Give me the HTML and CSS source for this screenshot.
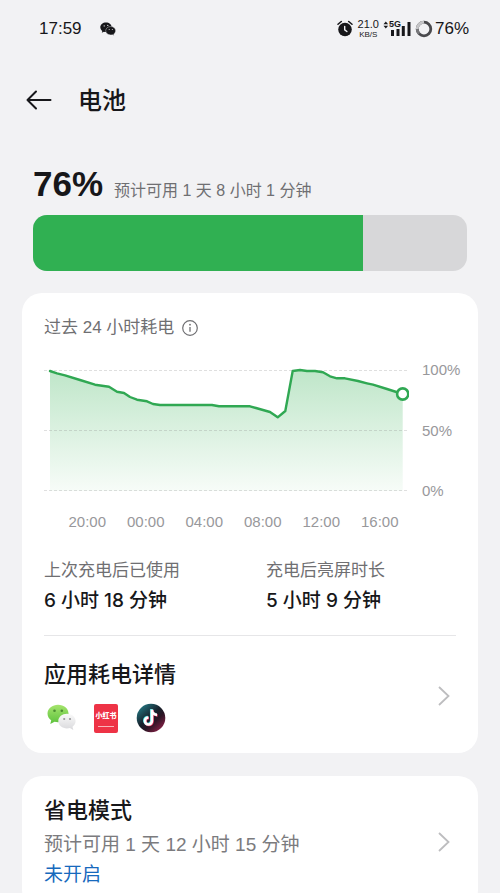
FILE: index.html
```html
<!DOCTYPE html>
<html lang="zh-CN">
<head>
<meta charset="utf-8">
<meta name="viewport" content="width=device-width, initial-scale=1">
<title>电池</title>
<link rel="stylesheet" href="styles.css">
</head>
<body>
<div class="status">
  <time>17:59</time>
  <svg class="status-chat" width="16" height="14" viewBox="0 0 16 14" aria-hidden="true">
    <path d="M6 .4C2.800.4.3 2.500.3 5.200c0 1.500.8 2.800 2 3.700l-.5 1.800 2.100-1c.6.2 1.300.3 2.100.3 3.200 0 5.700-2.100 5.700-4.800S9.200.4 6 .4z" fill="#17171a"/>
    <path d="M10.700 4.500c-2.800 0-5 1.900-5 4.200s2.200 4.200 5 4.200c.6 0 1.200-.1 1.700-.2l1.700.9-.4-1.600c1.200-.8 1.900-1.900 1.900-3.300 0-2.300-2.100-4.200-4.900-4.200z" fill="#17171a" stroke="#f2f2f4" stroke-width=".4"/>
    <circle cx="4.200" cy="3.900" r=".6" fill="#f2f2f4"/><circle cx="7.800" cy="3.400" r=".6" fill="#f2f2f4"/>
    <circle cx="9.200" cy="7.600" r=".5" fill="#f2f2f4"/><circle cx="12.300" cy="7.600" r=".5" fill="#f2f2f4"/>
  </svg>
  <div class="status-right">
    <svg width="16" height="17" viewBox="0 0 16 17" aria-hidden="true">
      <circle cx="8" cy="9.500" r="6.800" fill="#17171a"/>
      <path d="M1 4.300 4.300 1.500M15 4.300 11.700 1.500" stroke="#17171a" stroke-width="1.500" stroke-linecap="round"/>
      <path d="M7.700 6.500v3.300l2.200 1.700" fill="none" stroke="#f2f2f4" stroke-width="1.400" stroke-linecap="round"/>
    </svg>
    <div class="speed"><span>21.0</span><small>KB/S</small></div>
    <div class="signal">
      <svg width="28" height="17" viewBox="0 0 28 17" aria-hidden="true">
        <path d="M.5 4.300 2.800 1.500 5.100 4.300zM.5 5.700 2.800 8.500 5.100 5.700z" fill="#17171a"/>
        <path d="M8 10h3v6H8zM13.500 9h3v7h-3zM18.800 6h3v10h-3zM24.500 2h3v14h-3z" fill="#17171a"/>
      </svg>
      <span class="network">5G</span>
    </div>
    <svg width="18" height="18" viewBox="0 0 18 18" aria-hidden="true">
      <g fill="none" stroke-width="2.800">
        <circle cx="9" cy="9" r="6.800" stroke="#4a4a4d"/>
        <path d="M9 2.200A6.800 6.800 0 0 0 2.200 9" stroke="#c6c6c8"/>
        <path d="M2.200 9A6.800 6.800 0 0 0 4.200 13.800" stroke="#77777a"/>
      </g>
    </svg>
    <span class="level">76%</span>
  </div>
</div>

<header class="appbar">
  <button class="back" type="button" aria-label="返回">
    <svg width="26" height="20" viewBox="0 0 26 20" aria-hidden="true">
      <path d="M24.500 10H1.500M10 1.500 1.500 10 10 18.500" fill="none" stroke="#17171a" stroke-width="2" stroke-linecap="round" stroke-linejoin="round"/>
    </svg>
  </button>
  <h1>电池</h1>
</header>

<main>
  <section class="summary">
    <p class="headline"><strong>76%</strong><span>预计可用 1 天 8 小时 1 分钟</span></p>
    <div class="meter"><div class="meter-fill" style="width:76%"></div></div>
  </section>

  <section class="card">
    <h2 class="caption">过去 24 小时耗电
      <svg width="16" height="16" viewBox="0 0 16 16" aria-hidden="true">
        <circle cx="8" cy="8" r="7.300" fill="none" stroke="#6f6f72" stroke-width="1.200"/>
        <path d="M8 7v4.700" stroke="#6f6f72" stroke-width="1.300"/><circle cx="8" cy="4.700" r=".9" fill="#6f6f72"/>
      </svg>
    </h2>
    <div class="chart">
      <svg class="plot" viewBox="0 0 365 141" aria-hidden="true">
        <defs>
          <linearGradient id="area" x1="0" y1="10" x2="0" y2="131" gradientUnits="userSpaceOnUse">
            <stop offset="0" stop-color="#bfe6c9"/><stop offset="1" stop-color="#f7fcf8"/>
          </linearGradient>
        </defs>
        <path fill="url(#area)" d="M6 11 13 13.300 21 15.300 36 20 51 24.700 65 26.700 73 31.700 80 33 86 37 93 39.700 103 41.300 109 44 116 45H168L175 46.300H206L212 48 226 52 233.700 57.300 241.300 51 248.700 11 256 10 263 11H271L279 12.300 286 16.300 293 18.300H301L314 21 323 23.300 329 24.700 343 29 358.700 34V131H6z"/>
        <path d="M0 10.500H365M0 70.500H365M0 130.500H365" stroke="#808080" stroke-opacity=".25" stroke-width="1" stroke-dasharray="3 2"/>
        <path fill="none" stroke="#30a853" stroke-width="2.400" stroke-linejoin="round" stroke-linecap="round" d="M6 11 13 13.300 21 15.300 36 20 51 24.700 65 26.700 73 31.700 80 33 86 37 93 39.700 103 41.300 109 44 116 45H168L175 46.300H206L212 48 226 52 233.700 57.300 241.300 51 248.700 11 256 10 263 11H271L279 12.300 286 16.300 293 18.300H301L314 21 323 23.300 329 24.700 343 29 358.700 34"/>
        <circle cx="358.700" cy="34" r="5.600" fill="#fff" stroke="#30a853" stroke-width="2.600"/>
      </svg>
      <div class="y-axis"><span>100%</span><span>50%</span><span>0%</span></div>
      <div class="x-axis"><span>20:00</span><span>00:00</span><span>04:00</span><span>08:00</span><span>12:00</span><span>16:00</span></div>
    </div>
    <dl class="stats">
      <div><dt>上次充电后已使用</dt><dd>6 小时 18 分钟</dd></div>
      <div><dt>充电后亮屏时长</dt><dd>5 小时 9 分钟</dd></div>
    </dl>
    <a class="row" href="#apps">
      <div>
        <h3>应用耗电详情</h3>
        <div class="apps">
          <svg width="30" height="30" viewBox="0 0 30 30" aria-hidden="true">
            <defs>
              <linearGradient id="leaf" x1="0" y1="0" x2="0" y2="1"><stop offset="0" stop-color="#a5e46d"/><stop offset="1" stop-color="#5cc13c"/></linearGradient>
              <linearGradient id="pearl" x1="0" y1="0" x2="0" y2="1"><stop offset="0" stop-color="#fafafa"/><stop offset="1" stop-color="#d9d9dc"/></linearGradient>
            </defs>
            <path d="M12 1.800C6.500 1.800 1.500 5.600 1.500 10.500c0 2.900 1.500 5.200 3.700 6.800L4.300 21l4.200-2.200c1.100.3 2.300.4 3.500.4 6 0 10.500-3.900 10.500-8.700S18 1.800 12 1.800z" fill="url(#leaf)"/>
            <circle cx="8.500" cy="7.800" r="1.300" fill="#4b8d32"/><circle cx="15.800" cy="7.800" r="1.300" fill="#4b8d32"/>
            <path d="M21 10.800c-4.800 0-8.700 3.200-8.700 7.300s3.900 7.400 8.700 7.400c1 0 2-.1 2.900-.4l3.400 1.900-.8-3.200c1.900-1.400 3.100-3.400 3.100-5.700 0-4.100-3.800-7.300-8.600-7.300z" fill="url(#pearl)"/>
            <circle cx="18.200" cy="16" r="1.100" fill="#98989b"/><circle cx="24" cy="16" r="1.100" fill="#98989b"/>
          </svg>
          <span class="red-app"><b>小红书</b><i></i></span>
          <svg width="30" height="30" viewBox="0 0 30 30" aria-hidden="true">
            <defs>
              <linearGradient id="disc" x1=".1" y1=".1" x2=".85" y2=".95"><stop offset="0" stop-color="#237782"/><stop offset=".45" stop-color="#17202b"/><stop offset=".65" stop-color="#2b1524"/><stop offset="1" stop-color="#8c2148"/></linearGradient>
            </defs>
            <circle cx="15" cy="15" r="14.300" fill="url(#disc)"/>
            <g fill="none" stroke-width="2.700">
              <path d="M15.900 6.500V18a3.500 3.500 0 1 1-3.500-3.500M15.900 7c.2 2.800 2.300 4.700 5.100 4.800" stroke="#35d4d8" transform="translate(-.6 -.5)"/>
              <path d="M15.900 6.500V18a3.500 3.500 0 1 1-3.500-3.500M15.900 7c.2 2.800 2.300 4.700 5.100 4.800" stroke="#ee3b65" transform="translate(.6 .5)"/>
              <path d="M15.900 6.500V18a3.500 3.500 0 1 1-3.500-3.500M15.900 7c.2 2.800 2.300 4.700 5.100 4.800" stroke="#fff"/>
            </g>
          </svg>
        </div>
      </div>
      <svg class="chevron" width="12" height="20" viewBox="0 0 12 20" aria-hidden="true"><path d="M1 1 10.500 10 1 19" fill="none" stroke="#bdbdbf" stroke-width="1.800"/></svg>
    </a>
  </section>

  <section class="card">
    <a class="row saver" href="#saver">
      <div>
        <h3>省电模式</h3>
        <p>预计可用 1 天 12 小时 15 分钟</p>
        <p class="state">未开启</p>
      </div>
      <svg class="chevron" width="12" height="20" viewBox="0 0 12 20" aria-hidden="true"><path d="M1 1 10.500 10 1 19" fill="none" stroke="#bdbdbf" stroke-width="1.800"/></svg>
    </a>
  </section>
</main>
</body>
</html>
```

FILE: styles.css
```css
* { box-sizing: border-box; margin: 0; padding: 0; }

body {
  background: #f2f2f4;
  color: #17171a;
  font-family: "Liberation Sans", "Noto Sans CJK SC", sans-serif;
  font-size: 16px;
  line-height: 24px;
}

a { color: inherit; text-decoration: none; }
svg { display: block; flex: none; }

.status {
  display: flex;
  align-items: center;
  height: 57px;
  padding: 0 31px 0 39px;
}
.status time { font-size: 17px; }
.status-chat { margin-left: 18px; }
.status-right { display: flex; align-items: center; margin-left: auto; }
.speed {
  display: flex;
  flex-direction: column;
  align-items: center;
  margin: 0 4px 0 5px;
  font-size: 11px;
  line-height: 12px;
}
.speed small { font-size: 8px; line-height: 9px; }
.signal { position: relative; }
.network {
  position: absolute;
  top: 0;
  left: 6px;
  background: #f2f2f4;
  font-size: 9px;
  font-weight: 700;
  line-height: 9px;
}
.signal + svg { margin: 0 2px 0 4px; }
.level { font-size: 17px; }

.appbar {
  display: flex;
  align-items: center;
  gap: 26px;
  height: 86px;
  padding: 0 26px;
}
.back { border: 0; background: none; cursor: pointer; }
h1 { padding-top: 2px; font-size: 24px; font-weight: 500; line-height: 36px; }

main { padding: 0 22px; }

.summary { padding: 21px 11px 22px; }
.headline { display: flex; align-items: baseline; gap: 11px; }
.headline strong { font-size: 35px; font-weight: 700; line-height: 40px; }
.headline span { color: #6f6f72; }
.meter {
  height: 56px;
  margin-top: 11px;
  overflow: hidden;
  border-radius: 14px;
  background: #d7d7d9;
}
.meter-fill { height: 100%; background: #30b052; }

.card {
  margin-bottom: 23px;
  padding: 22px 22px 20px;
  border-radius: 20px;
  background: #fff;
}
.caption {
  display: flex;
  align-items: center;
  gap: 8px;
  color: #6f6f72;
  font-size: 17px;
  font-weight: 400;
  line-height: 26px;
}

.chart {
  display: grid;
  grid-template-columns: 1fr 34px;
  column-gap: 13px;
  margin-top: 19px;
  color: #98989b;
  font-size: 15px;
  line-height: 20px;
}
.plot { width: 100%; }
.y-axis { display: flex; flex-direction: column; justify-content: space-between; }
.x-axis {
  display: grid;
  grid-template-columns: repeat(6, 1fr);
  margin-top: 11px;
  padding-left: 14px;
  text-align: center;
}

.stats {
  display: grid;
  grid-template-columns: 1fr 1fr;
  gap: 32px;
  margin-top: 26px;
  padding-bottom: 20px;
  border-bottom: 1px solid #e6e6e8;
}
dt { color: #6f6f72; font-size: 17px; line-height: 26px; }
dd {
  margin-top: 3px;
  font-family: Inter, "Noto Sans CJK SC", sans-serif;
  font-size: 19px;
  font-weight: 500;
  line-height: 28px;
}

.row { display: flex; align-items: center; justify-content: space-between; padding: 22px 6px 0 0; }
h3 { font-size: 22px; font-weight: 500; line-height: 34px; }
.apps { display: flex; gap: 16px; align-items: center; margin-top: 11px; padding-left: 2px; }
.red-app {
  display: flex;
  flex-direction: column;
  align-items: center;
  width: 24px;
  height: 29px;
  margin: 0 2px;
  padding-top: 7px;
  border-radius: 2px;
  background: #ee3346;
  color: #fff;
}
.red-app b { font-size: 7px; font-weight: 900; line-height: 9px; }
.red-app i { width: 16px; height: 1px; margin-top: 6px; background: #f9b4ba; }

.card:last-child { padding-top: 18px; }
.saver { padding-top: 0; }
.saver h3 { margin-bottom: 2px; }
.saver p { color: #7b7b7e; font-size: 19px; line-height: 30px; }
.saver .state { color: #1769bd; }
```
